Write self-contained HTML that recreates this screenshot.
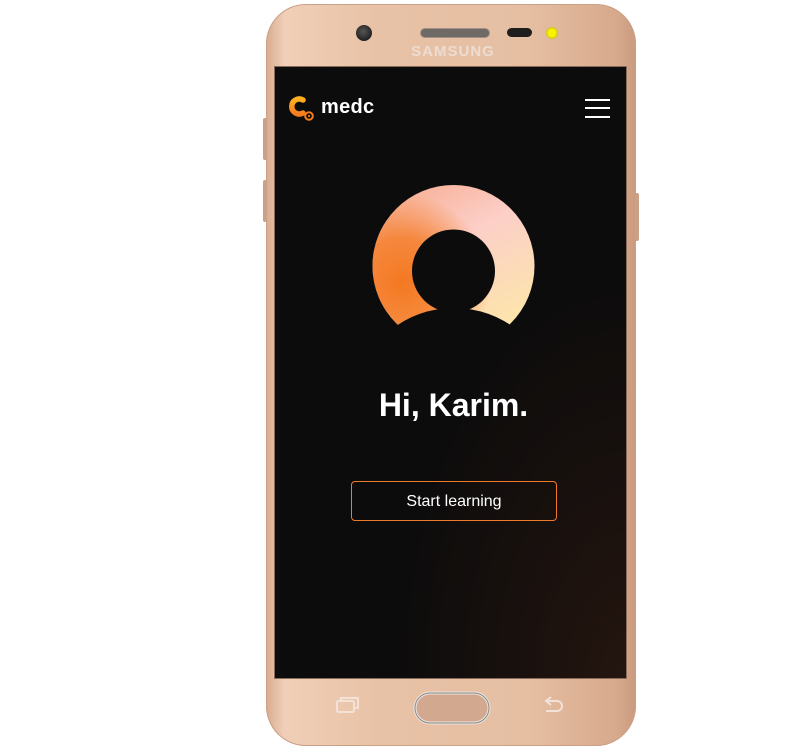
<!DOCTYPE html>
<html><head><meta charset="utf-8"><style>
html,body{margin:0;padding:0;background:#fff;width:789px;height:751px;overflow:hidden;font-family:"Liberation Sans",sans-serif}
.abs{position:absolute}
</style></head><body>
<div class="abs" style="left:266px;top:4px;width:370px;height:742px;border-radius:40px;background:linear-gradient(90deg,#d9ab8e 0%,#f0cfb8 5%,#e8c2a6 30%,#e6bfa3 70%,#d7a98c 95%,#c99a7e 100%);box-shadow:inset 0 0 0 1px #caa186"></div>
<div class="abs" style="left:263px;top:118px;width:4px;height:42px;background:#caa086;border-radius:2px"></div>
<div class="abs" style="left:263px;top:180px;width:4px;height:42px;background:#caa086;border-radius:2px"></div>
<div class="abs" style="left:635px;top:193px;width:4px;height:48px;background:#caa086;border-radius:2px"></div>
<div class="abs" style="left:356px;top:25px;width:16px;height:16px;border-radius:50%;background:radial-gradient(circle at 45% 40%,#555,#222 70%)"></div>
<div class="abs" style="left:421px;top:29px;width:68px;height:8px;border-radius:4px;background:#6f6a66;box-shadow:0 0 0 1px #a09088"></div>
<div class="abs" style="left:507px;top:28px;width:25px;height:9px;border-radius:5px;background:#1e1e1e"></div>
<div class="abs" style="left:546px;top:27px;width:12px;height:12px;border-radius:50%;background:radial-gradient(circle,#f8f400 40%,#b6a030 90%)"></div>
<div class="abs" style="left:405px;top:43px;width:96px;text-align:center;color:#ecdcd2;font-weight:bold;font-size:15px;letter-spacing:1px">SAMSUNG</div>
<div class="abs" style="left:275px;top:67px;width:351px;height:611px;background:radial-gradient(ellipse at 100% 100%,#24150f 0%,#0d0c0c 45%,#0c0c0c 100%);box-shadow:0 0 0 1px #8a6a58"></div>
<svg class="abs" style="left:287px;top:94px" width="30" height="28" viewBox="0 0 30 28">
<defs><linearGradient id="lg" x1="0" y1="0" x2="0" y2="1"><stop offset="0" stop-color="#ffb020"/><stop offset="1" stop-color="#f57c1f"/></linearGradient></defs>
<path d="M16 6 A7.5 7.5 0 1 0 16 19" fill="none" stroke="url(#lg)" stroke-width="5.5" stroke-linecap="round"/>
<circle cx="22" cy="22" r="3.8" fill="none" stroke="#f57c1f" stroke-width="2"/>
<circle cx="22" cy="22" r="1.1" fill="#f57c1f"/>
</svg>
<div class="abs" style="left:321px;top:96px;color:#fff;font-weight:bold;font-size:20px;letter-spacing:0.3px">medc</div>
<div class="abs" style="left:585px;top:99px;width:25px;height:2px;background:#fff"></div>
<div class="abs" style="left:585px;top:107px;width:25px;height:2px;background:#fff"></div>
<div class="abs" style="left:585px;top:116px;width:25px;height:2px;background:#fff"></div>
<svg class="abs" style="left:360px;top:175px" width="190" height="165" viewBox="360 175 190 165">
<defs>
<radialGradient id="g1" cx="0.18" cy="0.6" r="0.55"><stop offset="0" stop-color="#f47820"/><stop offset="0.5" stop-color="#f47820" stop-opacity="0.8"/><stop offset="1" stop-color="#f47820" stop-opacity="0"/></radialGradient>
<linearGradient id="g2" x1="0.3" y1="0" x2="0.8" y2="1"><stop offset="0" stop-color="#f8b39a"/><stop offset="0.35" stop-color="#fccfc8"/><stop offset="1" stop-color="#fde9a6"/></linearGradient>
<clipPath id="c"><rect x="360" y="175" width="190" height="153"/></clipPath>
</defs>
<g clip-path="url(#c)">
<circle cx="453.5" cy="266" r="81" fill="url(#g2)"/>
<circle cx="453.5" cy="266" r="81" fill="url(#g1)"/>
</g>
<circle cx="453.5" cy="271" r="41.5" fill="#0c0c0c"/>
<ellipse cx="454" cy="385" rx="90" ry="77" fill="#0c0c0c"/>
</svg>
<div class="abs" style="left:275px;top:387px;width:357px;text-align:center;color:#fff;font-weight:bold;font-size:32px">Hi, Karim.</div>
<div class="abs" style="left:351px;top:481px;width:204px;height:38px;border:1px solid #f07a2c;border-radius:4px;color:#fff;font-size:16px;text-align:center;line-height:40px">Start learning</div>
<svg class="abs" style="left:330px;top:688px" width="240" height="40" viewBox="0 0 240 40">
<rect x="7" y="13" width="17" height="11" rx="1.5" fill="none" stroke="#f2e2d8" stroke-width="2"/>
<path d="M11 13 V10 H28 V20 H24" fill="none" stroke="#f2e2d8" stroke-width="2"/>
<rect x="85" y="5" width="74" height="30" rx="15" fill="#d2a98f" stroke="#e9e5e2" stroke-width="3"/>
<rect x="85" y="5" width="74" height="30" rx="15" fill="none" stroke="#8d8580" stroke-width="1"/>
<path d="M217 13 H227 A5 5 0 0 1 227 23 H216" fill="none" stroke="#f2e2d8" stroke-width="2"/>
<path d="M221 9 L216 13 L221 17" fill="none" stroke="#f2e2d8" stroke-width="2"/>
</svg>
</body></html>
